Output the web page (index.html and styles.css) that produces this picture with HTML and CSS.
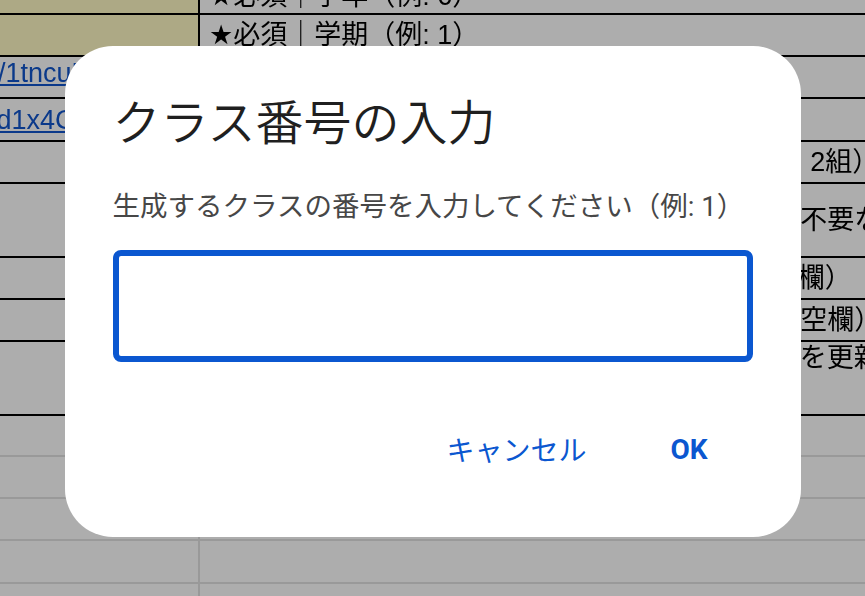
FILE: index.html
```html
<!DOCTYPE html>
<html lang="ja">
<head>
<meta charset="utf-8">
<title>クラス番号の入力</title>
<link rel="stylesheet" href="styles.css">
</head>
<body>
<div class="sheet">
  <div class="row h42">
    <div class="cell key key-hl"></div>
    <div class="cell val val-low"><span class="star">★</span>必須｜学年（例: 6）</div>
  </div>
  <div class="row h42">
    <div class="cell key key-hl"></div>
    <div class="cell val"><span class="star">★</span>必須｜学期（例: 1）</div>
  </div>
  <div class="row h42">
    <div class="cell key key-top"><a class="link" href="#">https://drive.google.com/drive/folders/1tncuR8vKqZst</a></div>
    <div class="cell val"><span class="star">★</span>必須｜テンプレートのフォルダURL</div>
  </div>
  <div class="row h43">
    <div class="cell key"><a class="link" href="#">https://docs.google.com/spreadsheets/d/1hQd1x4CT7sVhKw</a></div>
    <div class="cell val"><span class="star">★</span>必須｜名簿スプレッドシートのURL</div>
  </div>
  <div class="row h42">
    <div class="cell key"></div>
    <div class="cell val"><span class="star">★</span>必須｜クラス名を読点区切りで入力（例: 1組、 2組）</div>
  </div>
  <div class="row h74">
    <div class="cell key"></div>
    <div class="cell val"><span class="star">★</span>任意｜チェックを入れると生成後のシートから不要な行を削除します</div>
  </div>
  <div class="row h42">
    <div class="cell key"></div>
    <div class="cell val"><span class="star">★</span>任意｜担任の先生名（決まっていない場合は空欄）</div>
  </div>
  <div class="row h42">
    <div class="cell key"></div>
    <div class="cell val"><span class="star">★</span>任意｜副担任の先生名（いない場合や未定時は空欄）</div>
  </div>
  <div class="row h74">
    <div class="cell key"></div>
    <div class="cell val val-top"><span class="star">★</span>任意｜チェックを入れると既存のクラスシートを更新します</div>
  </div>
  <div class="row h41 row-light">
    <div class="cell key"></div>
    <div class="cell val"></div>
  </div>
  <div class="row h42 row-light">
    <div class="cell key"></div>
    <div class="cell val"></div>
  </div>
  <div class="row h42 row-light">
    <div class="cell key"></div>
    <div class="cell val"></div>
  </div>
  <div class="row h43 row-light">
    <div class="cell key"></div>
    <div class="cell val"></div>
  </div>
  <div class="row h42 row-light">
    <div class="cell key"></div>
    <div class="cell val"></div>
  </div>
</div>

<div class="scrim">
  <div class="dialog" role="dialog" aria-labelledby="dlg-title">
    <h1 class="dialog-title" id="dlg-title">クラス番号の入力</h1>
    <p class="dialog-text">生成するクラスの番号を入力してください（例: 1）</p>
    <input class="dialog-input" type="text" aria-label="クラス番号">
    <div class="dialog-actions">
      <button class="btn" type="button">キャンセル</button>
      <button class="btn btn-ok" type="button">OK</button>
    </div>
  </div>
</div>
</body>
</html>
```

FILE: styles.css
```css
html, body {
  margin: 0;
  padding: 0;
  width: 865px;
  height: 596px;
  overflow: hidden;
  background: #ffffff;
}

/* ---------- spreadsheet behind the dialog ---------- */
.sheet {
  margin: -27px 0 0 -120px;
  width: 1300px;
  font-family: "Liberation Sans", "Noto Sans CJK JP", sans-serif;
  font-size: 27px;
  line-height: 32px;
  color: #000000;
  will-change: transform;
}

.row {
  display: grid;
  grid-template-columns: 320px 980px;
}

.h41 { height: 41px; }
.h42 { height: 42px; }
.h43 { height: 43px; }
.h74 { height: 74px; }

.cell {
  box-sizing: border-box;
  display: flex;
  align-items: center;
  overflow: hidden;
  white-space: nowrap;
  border-bottom: 2px solid #000000;
  background: #ffffff;
}

.key {
  border-right: 2px solid #000000;
  justify-content: flex-end;
  padding-right: 8px;
}

.key-hl {
  background: #fff9c4;
}

.key-top {
  align-items: flex-start;
}

.val {
  padding-left: 9px;
}

.val-low {
  align-items: flex-end;
  padding-bottom: 1px;
}

.val-top {
  align-items: flex-start;
}

.star {
  font-family: "DejaVu Sans", sans-serif;
}

.row-light .cell {
  border-color: #e2e2e2;
}

.link {
  flex: none;
  color: #1155cc;
  text-decoration: underline;
}

/* ---------- modal ---------- */
.scrim {
  position: fixed;
  inset: 0;
  background: rgba(0, 0, 0, 0.32);
  display: flex;
  justify-content: center;
  align-items: flex-start;
  padding-top: 46px;
}

.dialog {
  box-sizing: border-box;
  width: 736px;
  padding: 50px 48px 53px;
  background: #ffffff;
  border-radius: 48px;
  font-family: "Roboto", "Noto Sans CJK JP", sans-serif;
}

.dialog-title {
  margin: 0;
  font-size: 48px;
  line-height: 56px;
  font-weight: 350;
  color: #1f1f1f;
}

.dialog-text {
  margin: 37px 0 0;
  font-size: 27.5px;
  line-height: 36px;
  color: #474747;
}

.dialog-input {
  display: block;
  box-sizing: border-box;
  width: 100%;
  height: 112px;
  margin-top: 25px;
  padding: 0 20px;
  border: 6px solid #0b57d0;
  border-radius: 8px;
  background: #ffffff;
  font: 26px "Roboto", "Noto Sans CJK JP", sans-serif;
  outline: none;
}

.dialog-actions {
  display: flex;
  justify-content: flex-end;
  gap: 40px;
  margin-top: 52px;
  padding-right: 23px;
  height: 70px;
}

.btn {
  height: 70px;
  padding: 0 22px;
  border: 0;
  background: transparent;
  color: #0b57d0;
  font: 400 28px "Roboto", "Noto Sans CJK JP", sans-serif;
  cursor: pointer;
}

.btn-ok {
  font-weight: 700;
}
```
